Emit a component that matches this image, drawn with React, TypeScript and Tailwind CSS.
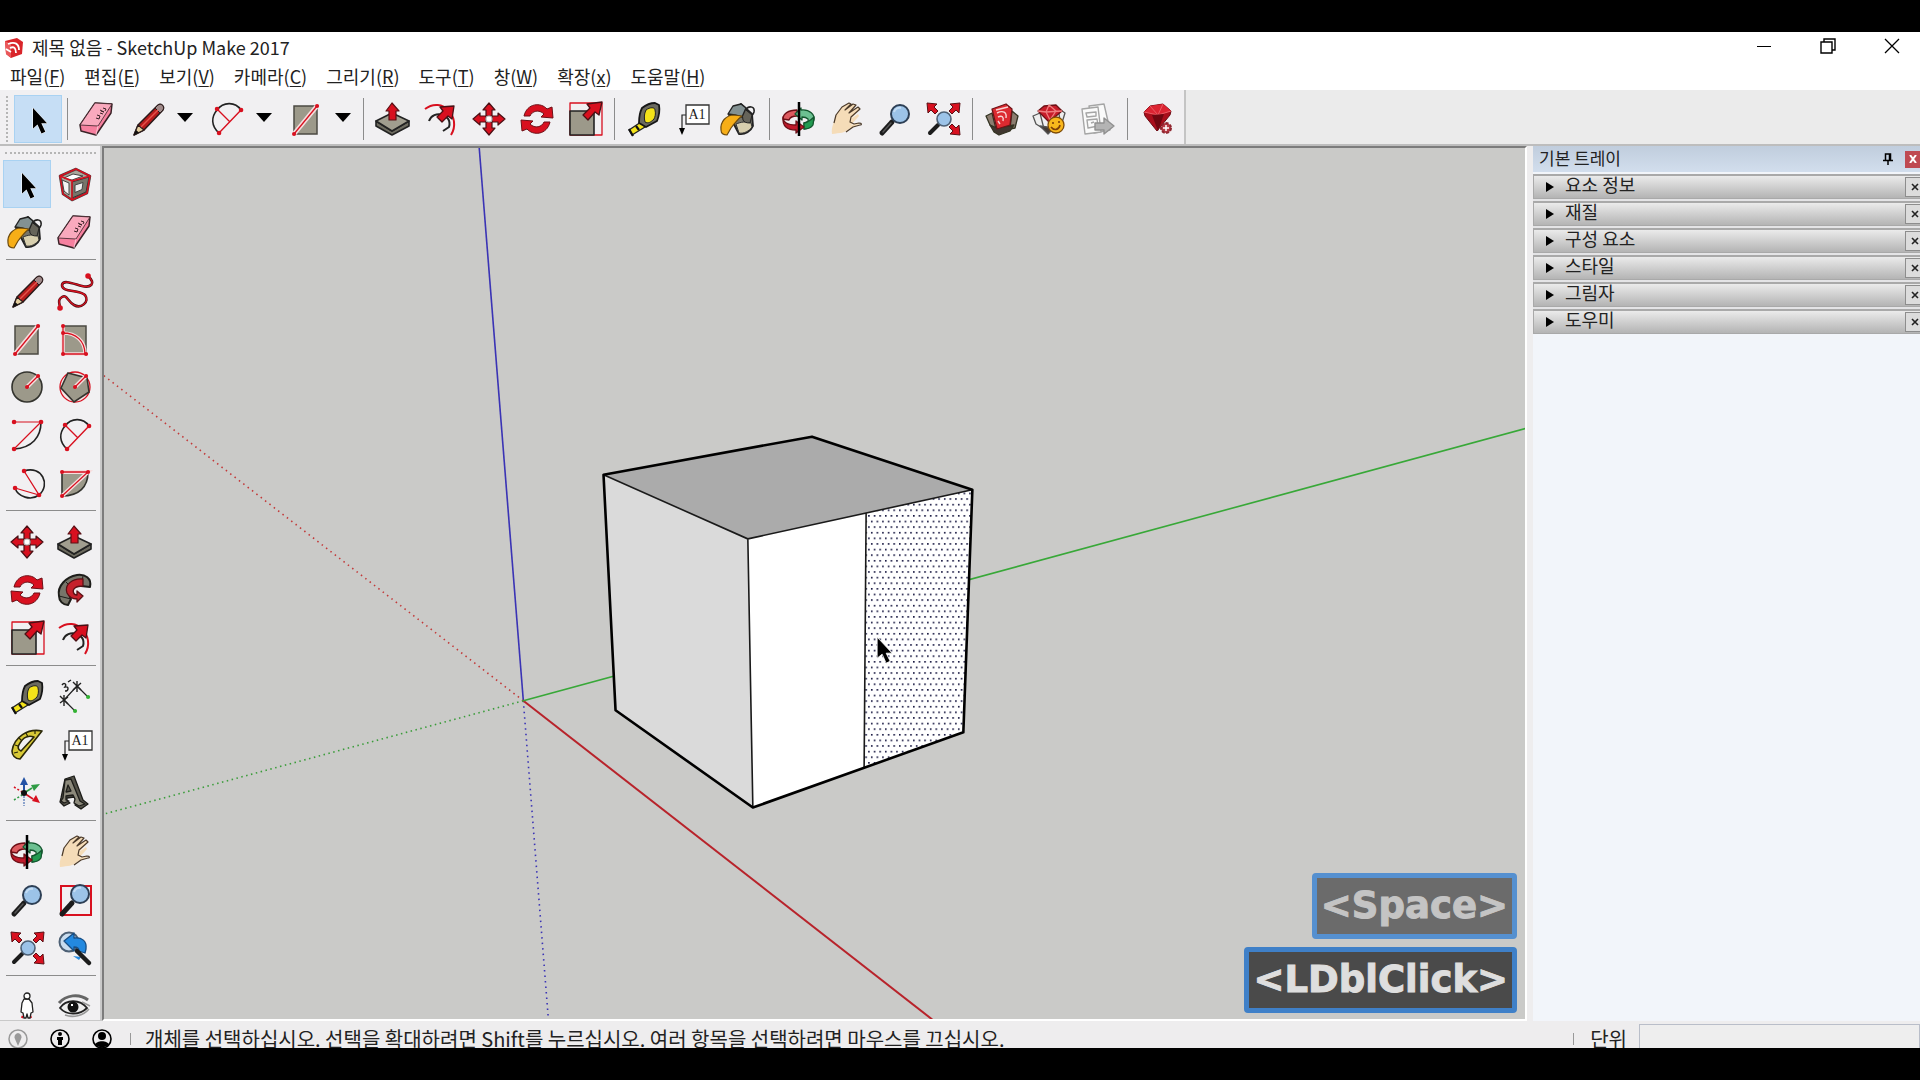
import React from 'react';

const RED = '#d8101f';

const icons: Record<string, React.ReactNode> = {
  select: (
    <path d="M11 5v20.500l4.500-4 4 9 3.800-1.800-4-8.500h5.700z" fill="#000" stroke="#fff" strokeWidth="1" paintOrder="stroke" />
  ),
  component: (
    <g strokeLinejoin="round">
      <path d="M1 8 17 1l14 7-3 17-15 7L4 26z" fill="#aaa79b" stroke="#444" strokeWidth="2.500" />
      <path d="m13 14 17-5-3 15-14 6z" fill="#77756a" stroke="#333" />
      <path d="m16 17 8-2.500-1 7-7 3z" fill="#eee" stroke="#444" />
      <path d="m5 10 9-4 10 2-11 4z" fill="#fff" stroke="#444" />
      <path d="m3 12 7 3v12l-5-4z" fill="#f4f4f4" stroke="#444" />
      <path d="M1 8 17 1l14 7-3 17-15 7L4 26zM1 8l12 5 18-5M13 13v19" fill="none" stroke={RED} strokeWidth="1.500" />
    </g>
  ),
  paint: (
    <g strokeLinejoin="round">
      <path d="M22 6c4-4 9-2 8 3-1 3-3 4-4 4" fill="none" stroke="#222" strokeWidth="1.600" />
      <path d="M5 12 17 1l11 10 1 12c-2 5-8 9-14 8z" fill="#77756a" stroke="#222" strokeWidth="1.800" />
      <path d="M12 21c5-2 10-3 15-1l1 4c-3 4-8 7-13 6z" fill="#d8cfae" stroke="#333" />
      <path d="m17 3 11 9-2 8c-4 0-6-1-7-3z" fill="#66645a" stroke="#222" />
      <path d="m4 11 5-8 8-2 5 4-4 9-7-2z" fill="#839192" stroke="#222" strokeWidth="1.400" />
      <path d="M-3 27c-1-8 5-15 13-15l8 1c-4 3-8 8-11 12l-4 7c-3 0-6-1-6-5z" fill="#f7ae17" stroke="#6b4a10" strokeWidth="1.200" />
    </g>
  ),
  eraser: (
    <g strokeLinejoin="round" stroke="#3a2227" strokeWidth="1.500">
      <path d="M-1 22 14 0l17 1-1 9-15 22-15-4z" fill="#f6809f" />
      <path d="M-1 22 14 0l17 1-14 22z" fill="#f9a9bd" strokeWidth="0.800" />
      <path d="m17 23-2 9" strokeWidth="0.800" stroke="#fbd5de" />
      <path d="m15 15 3 1 1-3-3-1m3-2 3 1m-2-3 3 1m-1-4 3 1-1 2m-5-1 4 2" fill="none" strokeWidth="1" />
    </g>
  ),
  pencil: (
    <g strokeLinejoin="round">
      <path d="m2 32 4-10L26 2c3-2 7 1 5 5L12 27z" fill="#b71c1c" stroke="#2a1a1a" strokeWidth="1.500" />
      <path d="m2 32 4-10 6 5z" fill="#e4cf9f" stroke="#2a1a1a" strokeWidth="1.200" />
      <path d="m2 32 2-5 3 2.500z" fill="#111" />
      <path d="m23 5 3-3c3-2 7 1 5 5l-3 3z" fill="#a08a8a" stroke="#2a1a1a" />
      <path d="M9 24 26 7" stroke="#e5534b" strokeWidth="1.500" />
    </g>
  ),
  freehand: (
    <g fill="none" strokeLinecap="round">
      <path d="M29 1c9 8 2 12-6 10S4 4 3 10c0 8 16 4 23 10 5 7-4 14-11 10s-7-11-12-8-2 7-2 11" stroke="#4c1015" strokeWidth="2.600" />
      <path d="M29 1c9 8 2 12-6 10S4 4 3 10c0 8 16 4 23 10 5 7-4 14-11 10s-7-11-12-8-2 7-2 11" stroke={RED} strokeWidth="1.300" />
      <path d="M29 1h.1M1 33h.1" stroke={RED} strokeWidth="5.500" />
    </g>
  ),
  rect: (
    <g>
      <path d="M4 3h23v28H4z" fill="#9c998a" stroke="#4b4a43" strokeWidth="1.500" />
      <path d="M4 31 27 3" stroke="#f6dede" strokeWidth="4.500" />
      <path d="M4 31 27 3" stroke={RED} strokeWidth="1.300" />
      <path d="M4 31h.1M27 3h.1" stroke={RED} strokeWidth="4" strokeLinecap="round" />
    </g>
  ),
  rotrect: (
    <g fill="none">
      <path d="M4 3h23v28H4z" fill="#9c998a" stroke="#4b4a43" strokeWidth="1.500" />
      <path d="M4 10c13 0 22 8 22 21H4V3" stroke="#f6dede" strokeWidth="3.500" />
      <path d="M4 10c13 0 22 8 22 21H4V3" stroke={RED} strokeWidth="1.300" />
      <path d="M4 3h.1M4 10h.1M4 31h.1M27 31h.1" stroke={RED} strokeWidth="4" strokeLinecap="round" />
    </g>
  ),
  circle: (
    <g>
      <circle cx="16" cy="16" r="15" fill="#9c998a" stroke="#33332e" strokeWidth="1.600" />
      <path d="M16 16 27 5" stroke="#f6dede" strokeWidth="4" />
      <path d="M16 16 27 5" stroke={RED} strokeWidth="1.300" />
      <path d="M16 16h.1M27 5h.1" stroke={RED} strokeWidth="4" strokeLinecap="round" />
    </g>
  ),
  polygon: (
    <g>
      <circle cx="16" cy="16" r="15" fill="#f6e6e6" stroke={RED} strokeWidth="1.300" />
      <path d="M9 2 28 7l2 14-15 10L2 17z" fill="#9c998a" stroke="#33332e" strokeWidth="1.600" />
      <path d="M16 16 27 5" stroke="#f6dede" strokeWidth="4" />
      <path d="M16 16 27 5" stroke={RED} strokeWidth="1.300" />
      <path d="M16 16h.1M27 5h.1" stroke={RED} strokeWidth="4" strokeLinecap="round" />
    </g>
  ),
  arc: (
    <g fill="none">
      <path d="M30 3c0 15-9 26-27 27" stroke="#222" strokeWidth="1.600" />
      <path d="M3 3h27L3 30" stroke={RED} strokeWidth="1.200" />
      <path d="M3 3h.1M30 3h.1M3 30h.1" stroke={RED} strokeWidth="4.500" strokeLinecap="round" />
    </g>
  ),
  arc2: (
    <g fill="none">
      <path d="M30 7C24-2 12-1 6 7c-6 7-6 16 2 23" stroke="#222" strokeWidth="1.600" />
      <path d="M30 7 8 30M6 6l13 13" stroke={RED} strokeWidth="1.400" />
      <path d="M30 7h.1M8 30h.1M6 6h.1" stroke={RED} strokeWidth="4.500" strokeLinecap="round" />
    </g>
  ),
  arc3: (
    <g fill="none">
      <path d="M13 4c18-6 27 14 15 24-8 6-21 2-24-7" stroke="#222" strokeWidth="1.600" />
      <path d="m13 4 15 24L4 21" stroke={RED} strokeWidth="1.300" />
      <path d="M13 4h.1M28 28h.1M4 21h.1" stroke={RED} strokeWidth="4.500" strokeLinecap="round" />
    </g>
  ),
  pie: (
    <g>
      <path d="M3 5h26c0 15-9 24-26 24z" fill="#9c998a" stroke="#33332e" strokeWidth="1.600" />
      <path d="M3 29 29 5H3" fill="none" stroke="#f6dede" strokeWidth="4" />
      <path d="M3 29 29 5H3" fill="none" stroke={RED} strokeWidth="1.300" />
      <path d="M3 29h.1M29 5h.1M3 5h.1" stroke={RED} strokeWidth="4" strokeLinecap="round" />
    </g>
  ),
  move: (
    <g fill={RED} stroke="#4a1015" strokeWidth="1.200" strokeLinejoin="round">
      <path d="m16 0 6 7h-3v6h-6V7h-3zM16 32l-6-7h3v-6h6v6h3zM0 16l7-6v3h6v6H7v3zM32 16l-7 6v-3h-6v-6h6v-3z" />
      <circle cx="16" cy="16" r="3" fill="#fff" stroke="#bbb" />
    </g>
  ),
  pushpull: (
    <g stroke="#222" strokeWidth="1.600" strokeLinejoin="round">
      <path d="m-1 18 16 10 17-10v5L15 32l-16-9z" fill="#6d6b5f" />
      <path d="m-1 18 16-8 17 8-17 10z" fill="#a19e8f" />
      <path d="M15 0 9 8h3v9h7V8h3z" fill={RED} stroke="#5a1015" strokeWidth="1.200" />
    </g>
  ),
  rotate: (
    <g fill={RED} stroke="#6d0f16" strokeWidth="1" strokeLinejoin="round">
      <path d="M3 13C6 0 20-1 26 6l5-2 1 11-12-1 3-3C18 6 11 8 9 13z" />
      <path d="M29 19c-3 13-17 14-23 7l-5 2-1-11 12 1-3 3c5 5 12 3 14-2z" />
    </g>
  ),
  followme: (
    <g strokeLinejoin="round">
      <path d="M31 13C33 4 26 0 18 1 7 3-2 12 0 22c0 5 4 9 9 9l3-6c-4-6 1-14 10-13z" fill="#77756a" stroke="#1d1d1a" strokeWidth="2" />
      <path d="m24 2-2 10M0 22l12 3M7 8l6 6" stroke="#1d1d1a" />
      <path d="M24 5C13 4 5 11 8 19c2 4 6 6 10 6v3l6-6-6-5v4c-4 0-5-5-2-7 2-2 5-2 8-2z" fill="#c5202b" stroke="#5a1015" strokeWidth="1.300" />
    </g>
  ),
  scale: (
    <g strokeLinejoin="round">
      <path d="M1 0h32v32H1z" fill="none" stroke={RED} strokeWidth="1.300" />
      <path d="M1 8h24v24H1z" fill="#9c998a" stroke="#222" strokeWidth="1.600" />
      <path d="m33-1-3 13-4-3-7 8-5-5 7-7-3-4z" fill={RED} stroke="#4a1015" strokeWidth="1.300" />
    </g>
  ),
  offset: (
    <g fill="none" strokeLinejoin="round">
      <path d="M0 6c17-13 37 8 26 26" stroke={RED} strokeWidth="2" />
      <path d="M4 18c4-12 24-7 20 6l-6 4" stroke="#222" strokeWidth="2" />
      <path d="m29 3-2 13-4-3-6 6-5-5 6-6-3-4z" fill={RED} stroke="#4a1015" strokeWidth="1.300" />
    </g>
  ),
  tape: (
    <g strokeLinejoin="round">
      <path d="M13 19 1 27l3 5 13-8z" fill="#f4e319" stroke="#222" strokeWidth="1.400" />
      <path d="m1 26 4 7M8 23l3 4" stroke="#111" strokeWidth="2.200" />
      <path d="M14 5c5-4 9-5 13-5l4 2c1 6 0 11-2 16l-11 6-7-4c0-6 1-11 3-15z" fill="#6b6a60" stroke="#161616" strokeWidth="1.800" />
      <path d="M18 7c4-3 9-3 9 0 1 4 0 7-1 9-3 3-6 5-9 3-1-4-1-8 1-12z" fill="#f4e319" stroke="#222" />
    </g>
  ),
  dimension: (
    <g fill="none" stroke="#222" strokeWidth="1.200">
      <path d="M5 19 18 5M5 19l11 11M18 5l10 10" />
      <path d="m1 15 8 8M1 22l8-6M5 14v11M14 1l8 8M14 9l8-7M18 0v11" strokeWidth="1.400" />
      <path d="M3 4c2-3 5-1 3 2 4-1 4 4 0 4M9 1l3-2" strokeWidth="1.400" />
      <path d="M16 30h.1M29 16h.1" stroke="#33b233" strokeWidth="4" strokeLinecap="round" />
    </g>
  ),
  protractor: (
    <g strokeLinejoin="round">
      <path d="M31 2C17-1 3 8 1 22c0 4 3 8 8 8zM23 8 10 22c-3-1-4-4-1-8 3-5 8-8 14-6z" fill="#d8c936" fillRule="evenodd" stroke="#2b2809" strokeWidth="1.600" />
      <path d="m4 16 3 1M8 9l3 3M15 4l2 4M24 2v3M3 24l4-1" stroke="#2b2809" strokeWidth="1.200" />
    </g>
  ),
  text: (
    <g>
      <path d="M10 12H6v13" fill="none" stroke="#222" strokeWidth="1.200" />
      <path d="M3 25h6l-3 7z" fill="#000" />
      <path d="M10 2h23v19H10z" fill="#fff" stroke="#333" strokeWidth="1.300" />
      <text x="21" y="16" textAnchor="middle" className="font-['Liberation_Serif',serif] text-[14px]" fill="#222">A1</text>
    </g>
  ),
  axes: (
    <g strokeWidth="1.600">
      <path d="M13 16V6" stroke="#2352a5" strokeWidth="2" />
      <path d="m13 0 4 8H9z" fill="#2352a5" />
      <path d="m13 16 8-5" stroke="#2f9b45" />
      <path d="m29 7-9 1 3 6z" fill="#2f9b45" />
      <path d="m13 16 9 6" stroke={RED} />
      <path d="m29 26-4-8-4 6z" fill={RED} />
      <path d="M3 10l8 5" stroke={RED} strokeDasharray="2 2" />
      <path d="m3 23 8-5" stroke="#2f9b45" strokeDasharray="2 2" />
      <path d="M13 19v10" stroke="#2352a5" strokeDasharray="2 1" strokeOpacity="0.600" />
      <circle cx="13" cy="16" r="3" fill="#111" />
    </g>
  ),
  text3d: (
    <g strokeLinejoin="round" stroke="#1d1d1a" strokeWidth="1.300">
      <path d="M6 2 15-1l9 24 5 4-7 5-6-4 2-4-3-4-7 1v3l3 2-6 3-4-4 1-4z" fill="#55534a" />
      <path d="m6 3 6-1 9 22 5 3-6 2-5-3 1-4-2-4-7 1v4l3 1-5 2-3-2 2-3zm3 5L7 15l5-1z" fill="#8c897b" fillRule="evenodd" />
    </g>
  ),
  orbit: (
    <g strokeLinejoin="round" strokeWidth="1.300">
      <path d="M14 7C5 7 0 11 0 16l6 1c1-3 4-4 8-4z" fill="#dd5b60" stroke="#6d0f16" />
      <path d="M18 7c9-1 14 5 13 10-1 6-6 9-10 9v-6c3 0 5-2 4-4-1-1-3-2-6-2v3l-7-6 6-6z" fill="#6cc091" stroke="#14572f" />
      <path d="m31 14-1 8c-2 3-5 4-9 4v-6c5-1 7-3 10-6z" fill="#229a50" stroke="#14572f" />
      <path d="M0 14c0 6 5 8 13 8v-4l8 6-8 6v-3C5 27-1 24 0 14z" fill="#c01a2b" stroke="#6d0f16" />
      <path d="M16-1v34" stroke="#000" strokeWidth="2.500" />
    </g>
  ),
  pan: (
    <g strokeLinejoin="round">
      <path d="M1 31C0 24 3 20 5 12l6-8 7-4 2 1-6 6 8-6 3 1-7 8 9-6 2 2-9 10 7-5 1 2-8 9 6-2c3-1 3 1 1 2l-9 4c-4 4-9 4-17 5z" fill="#f5dcb8" />
      <path d="M3 20 5 12l6-8 7-4 2 1-6 6 8-6 3 1-7 8 9-6 2 2-9 8-1 5 4 2 5-1c3 0 3 2 1 2l-7 2-7 5" fill="none" stroke="#4b3a2a" strokeWidth="1.200" />
    </g>
  ),
  zoom: (
    <g>
      <path d="M13 19 3 30" stroke="#1c1c1c" strokeWidth="5" strokeLinecap="round" />
      <path d="M12 20 4 29" stroke="#555" strokeWidth="1.500" strokeLinecap="round" />
      <circle cx="21" cy="11" r="9" fill="#9cc3e8" stroke="#2d3f55" strokeWidth="2" />
      <path d="M15 9c1-3 4-5 7-4" stroke="#c3dcf3" strokeWidth="2" fill="none" />
    </g>
  ),
  zoomwin: (
    <g>
      <path d="M2 2h30v29H2z" fill="none" stroke={RED} strokeWidth="2" />
      <path d="M13 19 3 30" stroke="#1c1c1c" strokeWidth="5" strokeLinecap="round" />
      <circle cx="21" cy="10" r="9" fill="#9cc3e8" stroke="#2d3f55" strokeWidth="2" />
      <path d="M15 8c1-3 4-5 7-4" stroke="#c3dcf3" strokeWidth="2" fill="none" />
    </g>
  ),
  extents: (
    <g strokeLinejoin="round">
      <g fill={RED} stroke="#5a1015" strokeWidth="1">
        <path d="m0 0 10 1-3 3 4 4-3 3-4-4-3 3z" />
        <path d="m33 0-10 1 3 3-4 4 3 3 4-4 3 3z" />
        <path d="m33 32-10-1 3-3-4-4 3-3 4 4 3-3z" />
      </g>
      <path d="M11 22 3 30" stroke="#1c1c1c" strokeWidth="4" strokeLinecap="round" />
      <circle cx="17" cy="16" r="7" fill="#9cc3e8" stroke="#4d6075" strokeWidth="1.600" />
    </g>
  ),
  previous: (
    <g strokeLinejoin="round">
      <circle cx="10" cy="10" r="9.500" fill="#c9dcee" stroke="#4d6075" strokeWidth="2" />
      <path d="m5 9 10-8v5c8-1 13 3 12 11l-1 4-6-2c0-3-2-4-5-4v4z" fill="#2389e0" stroke="#174e85" strokeWidth="1.300" />
      <path d="m14 24 8 1-2 3z" fill="#2389e0" />
      <path d="m18 19 12 12" stroke="#1c1c1c" strokeWidth="4.500" strokeLinecap="round" />
    </g>
  ),
  camera: (
    <g fill="#fff" stroke="#222" strokeWidth="1.300" strokeLinejoin="round">
      <path d="m12 25-1 2m8-2 1 2" stroke={RED} strokeWidth="2.500" />
      <path d="M13 8 11 12l-1 9 2 1 1 5h2l1-4 1 4h2l1-5 2-1-1-9-3-4z" />
      <circle cx="16" cy="5" r="3" />
    </g>
  ),
  eye: (
    <g fill="none">
      <path d="M0 12C7 4 20 2 29 9" stroke="#666" strokeWidth="3" />
      <path d="M1 17c6-9 20-9 27 0-7 7-20 8-27 0z" fill="#eee" stroke="#222" strokeWidth="1.800" />
      <circle cx="14" cy="16" r="5.500" fill="#111" />
      <path d="M12 14h2" stroke="#fff" strokeWidth="2" />
      <path d="M6 24c8 3 18 1 24-6M23 11l8 4" stroke="#999" strokeWidth="1.600" />
    </g>
  ),
  warehouse: (
    <g strokeLinejoin="round" stroke="#332" strokeWidth="1.300">
      <path d="m0 13 6-3 4 16-6-4zM26 8l6 5-3 12-5 1z" fill="#8c7d70" />
      <path d="m4 22 7 3 17-3-4 6-11 4-5-3z" fill="#40362f" />
      <path d="M6 6 20 1l6 5-2 16-13 4z" fill="#dc2a30" stroke="#6d1216" />
      <path d="M11 10c6-3 10-1 9 5m-8-1c4-2 6 0 5 4m-5 0 2 3m-4-14 12-3" fill="none" stroke="#f9d4d4" strokeWidth="1.400" />
    </g>
  ),
  extwarehouse: (
    <g strokeLinejoin="round" stroke="#555" strokeWidth="1.300">
      <path d="m-1 13 7-3 4 16-8-5zM24 5l7 5-4 13z" fill="#eee" />
      <path d="m6 23 8 8 6-6z" fill="#453b35" />
      <path d="m4 8 6-5 12-1 6 6-13 11z" fill="#c81d2a" stroke="#6d1216" />
      <path d="m4 8 8 1 16-1M12 9l4 8 6-9-7-6z" fill="none" stroke="#ef7d7f" />
      <circle cx="22" cy="22" r="8" fill="#f9b71c" stroke="#7d4b08" />
      <path d="M19 19v2m6-3v2m-8 4c3 4 8 3 9-2" fill="none" stroke="#7d3d08" strokeWidth="1.600" />
    </g>
  ),
  layout: (
    <g strokeLinejoin="round" fill="#fafafa" stroke="#a5a5a5" strokeWidth="1.400">
      <path d="m7 3 15-2 6 26-16 3z" />
      <path d="m0 6 16-2 3 25-16 2z" />
      <path d="m4 10 10-1v4L5 14zM5 17l10-1 1 7-10 2zM9 20l3-1" />
      <path d="M13 20h9v-5l10 8-10 8v-4h-9z" fill="#b4b4b4" stroke="#909090" />
    </g>
  ),
  ruby: (
    <g strokeLinejoin="round">
      <path d="M3 9 9 3l13-2 8 7-1 4-13 16L4 13z" fill="#a90e1b" stroke="#6b0912" />
      <path d="M3 9 9 3l13-2 8 7-13 4z" fill="#dc2432" />
      <path d="m9 3 8 9 5-11M3 9l14 3 13-4" fill="none" stroke="#ea5c64" />
      <path d="m11 12 6 16 6-17z" fill="#6f0710" />
      <circle cx="25" cy="25" r="5" fill="#b53a44" stroke="#8f2630" strokeWidth="2" strokeDasharray="3 1.500" />
      <path d="M25 22v6m-3-3h6" stroke="#fff" strokeWidth="1.500" />
    </g>
  )
};

const ToolButton: React.FC<{ name: string; active?: boolean }> = ({ name, active }) => (
  <button
    aria-label={name}
    className={`flex h-12 w-12 shrink-0 items-center justify-center ${active ? 'border border-[#a9d2f2] bg-[#c6def5]' : ''}`}
  >
    <svg viewBox="0 0 32 32" className="h-8 w-8 overflow-visible">{icons[name]}</svg>
  </button>
);

const SplitTool: React.FC<{ name: string }> = ({ name }) => (
  <div className="flex items-center pl-[3px]">
    <ToolButton name={name} />
    <button aria-label={`${name} menu`} className="flex h-12 w-7 items-center justify-center pr-0.5 pb-1">
      <svg viewBox="0 0 16 9" className="h-[9px] w-4"><path d="M0 0h16L8 9z" /></svg>
    </button>
  </div>
);

const topGroups = [
  ['pushpull', 'offset', 'move', 'rotate', 'scale'],
  ['tape', 'text', 'paint'],
  ['orbit', 'pan', 'zoom', 'extents'],
  ['warehouse', 'extwarehouse', 'layout'],
  ['ruby']
];

const sideGroups = [
  ['select', 'component', 'paint', 'eraser'],
  ['pencil', 'freehand', 'rect', 'rotrect', 'circle', 'polygon', 'arc', 'arc2', 'arc3', 'pie'],
  ['move', 'pushpull', 'rotate', 'followme', 'scale', 'offset'],
  ['tape', 'dimension', 'protractor', 'text', 'axes', 'text3d'],
  ['orbit', 'pan', 'zoom', 'zoomwin', 'extents', 'previous'],
  ['camera', 'eye']
];

const menus = [
  ['파일', 'F'], ['편집', 'E'], ['보기', 'V'], ['카메라', 'C'], ['그리기', 'R'],
  ['도구', 'T'], ['창', 'W'], ['확장', 'x'], ['도움말', 'H']
];

const panels = ['요소 정보', '재질', '구성 요소', '스타일', '그림자', '도우미'];

const TitleBar: React.FC = () => (
  <header className="flex h-8 shrink-0 items-center bg-white pl-1">
    <svg viewBox="0 0 20 20" className="mr-2 h-5 w-5">
      <path d="m1 3 12-3 6 4-1 12-11 4-5-4z" fill="#d9252a" />
      <path d="m1 3 6 3v14l-5-4z" fill="#e9585a" />
      <path d="M4 6c7-3 11 0 11 6M6 10c4-2 6 0 6 5M2 11l5 3" fill="none" stroke="#fff" strokeWidth="1.800" />
    </svg>
    <h1 className="flex-1 pb-0.5 text-[18px] leading-6">제목 없음 - SketchUp Make 2017</h1>
    <div className="-mr-1 flex pb-1">
      <button aria-label="Minimize" className="flex h-7 w-16 items-center justify-center">
        <svg viewBox="0 0 16 16" className="h-4 w-4"><path d="M1 8.500h14" stroke="#000" /></svg>
      </button>
      <button aria-label="Restore" className="flex h-7 w-16 items-center justify-center">
        <svg viewBox="0 0 16 16" className="h-4 w-4" fill="none" stroke="#000" strokeWidth="1.400"><path d="M1 4h11v11H1zM4 4V1h11v11h-3" /></svg>
      </button>
      <button aria-label="Close" className="flex h-7 w-16 items-center justify-center">
        <svg viewBox="0 0 16 16" className="h-4 w-4"><path d="m1 1 14 14M15 1 1 15" stroke="#000" strokeWidth="1.300" /></svg>
      </button>
    </div>
  </header>
);

const Viewport: React.FC = () => (
  <main className="relative min-w-0 flex-1 border-2 border-t-[#7c7c7c] border-r-white border-b-white border-l-[#7c7c7c] bg-[#cacac8]">
    <svg viewBox="104 149 1421 869" preserveAspectRatio="xMidYMid slice" className="absolute inset-0 h-full w-full">
      <defs>
        <pattern id="dots" width="5.600" height="11.200" patternUnits="userSpaceOnUse">
          <path d="M0 0h1.600v1.600H0zM2.800 5.600h1.600v1.600H2.800z" fill="#15153f" />
        </pattern>
      </defs>
      <g fill="none" strokeWidth="1.600">
        <path d="M524 700.500 480 149" stroke="#3a33b5" />
        <path d="m524 700.500 25 318" stroke="#3a33b5" strokeDasharray="1.500 4" />
        <path d="m524 700.500 408 318" stroke="#b8232b" strokeWidth="2" />
        <path d="M524 700.500 104 375" stroke="#c23a3a" strokeDasharray="1.500 4" />
        <path d="m524 700.500 1001-272" stroke="#38a838" />
        <path d="M524 700.500 104 814" stroke="#3a9c3a" strokeDasharray="1.500 3.500" />
      </g>
      <path d="m604 475 208-38 160 53-224 49z" fill="#ababab" />
      <path d="m604 475 144 64 5 268-137-97z" fill="#dadada" />
      <path d="m748 539 224-49-9 242-210 75z" fill="#fff" />
      <path d="m866 513 106-23-9 242-99 36z" fill="url(#dots)" />
      <path d="m604 475 144 64 5 268M748 539l224-49M866 513l-2 255" fill="none" stroke="#1a1a1a" strokeWidth="1.600" />
      <path d="m604 475 208-38 160 53-9 242-210 75-137-97z" fill="none" stroke="#000" strokeWidth="2.600" strokeLinejoin="round" />
      <path d="M877 637v21l5-4 4 9 4-2-4-8h6z" fill="#000" stroke="#fff" strokeWidth="0.800" />
    </svg>
    <div className="absolute right-2 bottom-1.5 flex flex-col items-end gap-2 font-['DejaVu_Sans',sans-serif] text-[37px] leading-[48px] font-bold [-webkit-text-stroke:1px]">
      <kbd className="rounded-[4px] border-[5px] border-[#5590d0] bg-[#6b6b6b] px-1 py-1 font-[inherit] text-[#c4c4c4]">&lt;Space&gt;</kbd>
      <kbd className="rounded-[4px] border-[5px] border-[#3f80c8] bg-[#4a4a4a] px-1 py-1 font-[inherit] text-[#dedede]">&lt;LDblClick&gt;</kbd>
    </div>
  </main>
);

const Tray: React.FC = () => (
  <aside className="ml-1.5 flex w-[387px] shrink-0 flex-col overflow-hidden bg-[#f2f5fa]">
    <div className="mb-0.5 flex h-[26px] shrink-0 items-center bg-linear-to-b from-[#c0cddd] to-[#d2deed] pl-1.5">
      <h2 className="flex-1 pb-0.5 text-[17px] leading-6">기본 트레이</h2>
      <button aria-label="Pin" className="mr-3">
        <svg viewBox="0 0 10 12" className="h-3 w-[10px]"><path d="M2.500 7V1h5v6M0 7.500h10M5 7v5M6.500 1v6" fill="none" stroke="#000" strokeWidth="1.500" /></svg>
      </button>
      <button aria-label="Close tray" className="flex h-[17px] w-[15px] items-center justify-center bg-[#bf4a52]">
        <svg viewBox="0 0 8 8" className="h-2 w-2"><path d="m1 0 6 8M7 0 1 8" stroke="#fff" strokeWidth="2" /></svg>
      </button>
    </div>
    <div className="flex flex-col gap-0.5 bg-[#e4e4e6]">
      {panels.map((panel) => (
        <div key={panel} className="flex h-[25px] items-center border-t-2 border-b border-l border-[#a9a9a9] bg-linear-to-b from-[#ebebeb] to-[#b4b4b4]">
          <button className="flex h-full flex-1 items-center pl-3 text-left text-[18px] leading-5">
            <svg viewBox="0 0 8 10" className="mr-[11px] h-[10px] w-2"><path d="M0 0v10l8-5z" /></svg>
            <span className="pb-1.5">{panel}</span>
          </button>
          <button aria-label={`${panel} close`} className="flex h-5 w-[15px] items-center justify-end border border-r-0 border-[#8d8d8d] bg-[#dcdcdc]">
            <svg viewBox="0 0 8 8" className="mr-px h-2 w-2"><path d="m1 1 6 6M7 1 1 7" stroke="#222" strokeWidth="1.600" /></svg>
          </button>
        </div>
      ))}
    </div>
  </aside>
);

const StatusBar: React.FC = () => (
  <footer className="flex h-[27px] shrink-0 items-start overflow-hidden bg-[#eeedee] pl-2">
    <div className="flex gap-[22px] pt-2">
      <svg viewBox="0 0 20 20" className="h-5 w-5" fill="#999"><circle cx="10" cy="10" r="9" fill="none" stroke="#999" strokeWidth="1.500" /><path d="M10 4a4 4 0 0 1 3 6l-3 7-3-7a4 4 0 0 1 3-6z" /></svg>
      <svg viewBox="0 0 20 20" className="h-5 w-5"><circle cx="10" cy="10" r="9" fill="none" stroke="#000" strokeWidth="1.600" /><path d="M7 8h6v3h-1v5H8v-5H7z" /><circle cx="10" cy="5" r="2" /></svg>
      <svg viewBox="0 0 20 20" className="h-5 w-5"><circle cx="10" cy="10" r="9" fill="none" stroke="#000" strokeWidth="1.600" /><circle cx="10" cy="7" r="4" /><path d="M3 16c1-5 13-5 14 0l-7 3z" /></svg>
    </div>
    <div className="mt-3 ml-[18px] h-3 w-px bg-[#999]" />
    <p className="flex-1 pl-3.5 text-xl leading-9">개체를 선택하십시오. 선택을 확대하려면 Shift를 누르십시오. 여러 항목을 선택하려면 마우스를 끄십시오.</p>
    <div className="mt-3 h-3 w-px bg-[#999]" />
    <label htmlFor="unit" className="pr-3 pl-4 text-xl leading-9">단위</label>
    <input id="unit" className="mt-[3px] h-9 w-[281px] border border-[#b9bec9] bg-[#eeeeee] px-1 outline-none" />
  </footer>
);

const App: React.FC = () => {
  return (
    <div className="flex h-screen flex-col overflow-hidden bg-black py-8 font-['Noto_Sans_CJK_KR',sans-serif] text-[#222]">
      <TitleBar />
      <nav className="flex h-[26px] shrink-0 items-center gap-[19px] bg-white pb-0.5 pl-2.5 text-[18px] leading-6">
        {menus.map(([label, key]) => (
          <button key={key}>{label}(<u className="underline-offset-2">{key}</u>)</button>
        ))}
      </nav>
      <div className="flex h-14 shrink-0 border-b-2 border-[#bdbdbd] bg-[#ebebeb]">
        <div className="flex items-center border-r-2 border-[#c4c4c4] bg-[#f1f0f2] pt-1 pr-[3px] pl-1.5">
          <div className="mr-1.5 h-[46px] border-l-2 border-dotted border-[#b5b5b5]" />
          <ToolButton name="select" active />
          <div className="mx-[5px] h-[42px] w-px bg-[#8c8c8c]" />
          <ToolButton name="eraser" />
          <SplitTool name="pencil" />
          <SplitTool name="arc2" />
          <SplitTool name="rect" />
          {topGroups.map((group) => (
            <React.Fragment key={group[0]}>
              <div className="mx-[5px] h-[42px] w-px bg-[#8c8c8c]" />
              {group.map((name) => <ToolButton key={name} name={name} />)}
            </React.Fragment>
          ))}
        </div>
      </div>
      <div className="flex min-h-0 flex-1 bg-[#eeedee]">
        <div className="flex w-[102px] shrink-0 flex-col overflow-hidden border-r-2 border-b border-[#c9c9c9] bg-[#f1f0f2] pt-1.5 pl-[3px]">
          <div className="mr-1 mb-1.5 ml-0.5 border-t-2 border-dotted border-[#b5b5b5]" />
          {sideGroups.map((group, i) => (
            <React.Fragment key={group[0]}>
              {i > 0 && <div className="mt-[3px] mr-1 mb-[7px] ml-[3px] h-px shrink-0 bg-[#8c8c8c]" />}
              <div className="grid shrink-0 grid-cols-[48px_48px]">
                {group.map((name) => <ToolButton key={name} name={name} active={name === 'select'} />)}
              </div>
            </React.Fragment>
          ))}
        </div>
        <Viewport />
        <Tray />
      </div>
      <StatusBar />
    </div>
  );
};

export default App;
